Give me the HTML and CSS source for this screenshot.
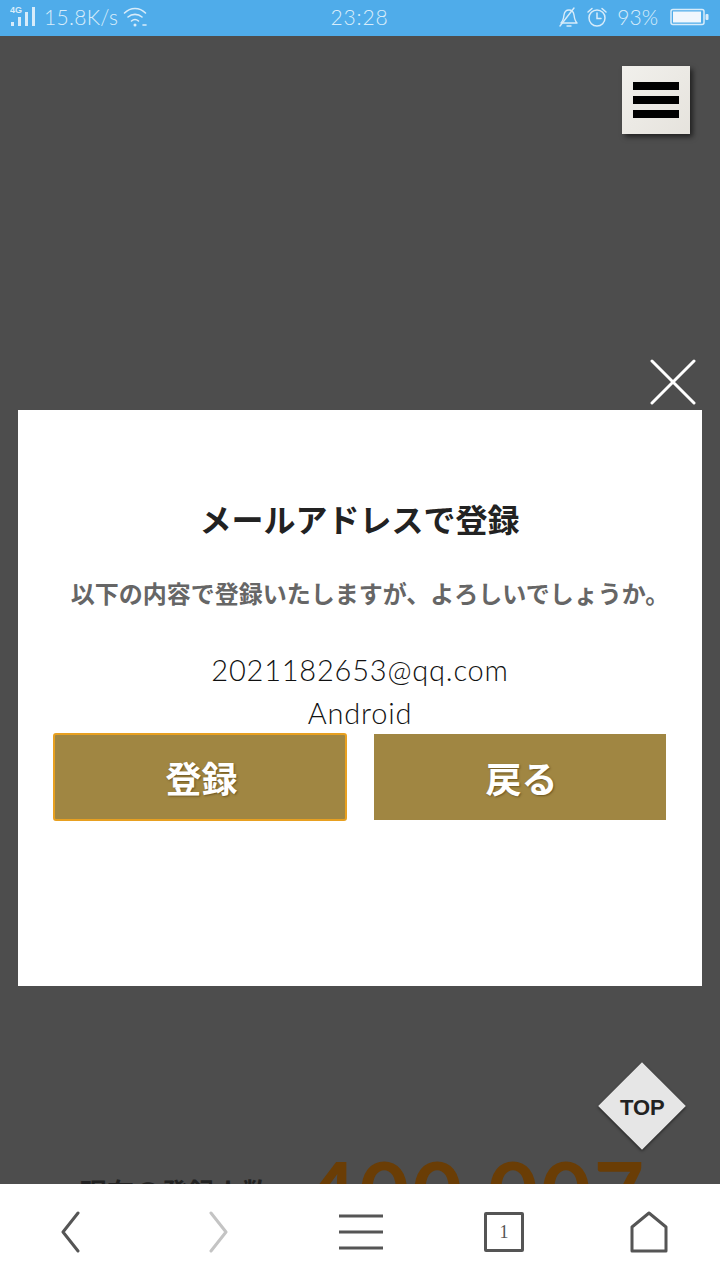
FILE: index.html
```html
<!DOCTYPE html>
<html lang="ja">
<head>
<meta charset="utf-8">
<title>メールアドレスで登録</title>
<link rel="stylesheet" href="styles.css">
</head>
<body>
<div class="phone">
  <header class="status">
    <div class="status-left">
      <svg class="sig" width="28" height="22" viewBox="0 0 28 22"><text x="0" y="7" class="sig-text">4G</text><g fill="#d8ecfa"><rect x="1" y="16" width="3" height="4"/><rect x="8" y="11" width="3" height="9"/><rect x="15" y="6" width="3" height="14"/><rect x="22" y="1" width="3" height="19"/></g></svg>
      <span class="speed">15.8K/s</span>
      <svg class="wifi" width="26" height="22" viewBox="0 0 26 22" fill="none" stroke="#d8ecfa" stroke-width="1.6" stroke-linecap="round"><path d="M1.500 7C7.500 1 16.500 1 22.500 7"/><path d="M5 11C9 7.500 15 7.500 19 11"/><path d="M8.500 15C10.800 13 13.200 13 15.500 15"/><circle cx="12" cy="19" r="1.500" fill="#d8ecfa" stroke="none"/><path d="M20 19h3"/></svg>
    </div>
    <div class="clock">23:28</div>
    <div class="status-right">
      <svg width="22" height="22" viewBox="0 0 22 22" fill="none" stroke="#d8ecfa" stroke-width="1.400" stroke-linecap="round" stroke-linejoin="round"><path d="M3 17c2-2 2.500-4 3-8 .4-3 2.500-5 5-5s4.600 2 5 5c.5 4 1 6 3 8z"/><path d="M9 20h4"/><path d="M2 20L16 2"/></svg>
      <svg width="22" height="22" viewBox="0 0 22 22" fill="none" stroke="#d8ecfa" stroke-width="1.500" stroke-linecap="round"><circle cx="11" cy="12" r="8"/><path d="M11 7v5.500h4"/><path d="M2 6l4-3.500M20 6l-4-3.500"/></svg>
      <span class="pct">93%</span>
      <svg width="39" height="18" viewBox="0 0 39 18"><rect x="1" y="1.500" width="33" height="15" rx="2" fill="none" stroke="#d8ecfa" stroke-width="1.500"/><rect x="3" y="3.500" width="28" height="11" fill="#f0f7fd"/><rect x="35.500" y="6" width="3" height="6" rx="1" fill="#d8ecfa"/></svg>
    </div>
  </header>

  <main class="stage">
    <span class="count-label">現在の登録人数</span>
    <span class="count-num">400,007</span>

    <button class="menu-btn" type="button" aria-label="menu"><span></span><span></span><span></span></button>

    <svg class="close" width="46" height="46" viewBox="0 0 46 46" stroke="#fff" stroke-width="3" stroke-linecap="round"><path d="M2 2L44 44M44 2L2 44"/></svg>

    <section class="modal">
      <h1 class="title">メールアドレスで登録</h1>
      <p class="lead">以下の内容で登録いたしますが、よろしいでしょうか。</p>
      <p class="value email">2021182653@qq.com</p>
      <p class="value device">Android</p>
      <div class="actions">
        <button class="action focus" type="button">登録</button>
        <button class="action" type="button">戻る</button>
      </div>
    </section>

    <a class="top"><span>TOP</span></a>
  </main>

  <nav class="nav">
    <svg width="22" height="42" viewBox="0 0 22 42" fill="none" stroke="#555" stroke-width="3" stroke-linecap="round" stroke-linejoin="round"><path d="M18 2L3 21l15 19"/></svg>
    <svg width="22" height="42" viewBox="0 0 22 42" fill="none" stroke="#c4c4c4" stroke-width="3" stroke-linecap="round" stroke-linejoin="round"><path d="M4 2l15 19L4 40"/></svg>
    <svg width="44" height="38" viewBox="0 0 44 38" stroke="#555" stroke-width="3"><path d="M0 3h44M0 19h44M0 35h44"/></svg>
    <div class="tabs">1</div>
    <svg width="38" height="42" viewBox="0 0 38 42" fill="none" stroke="#555" stroke-width="3" stroke-linejoin="round"><path d="M19 2L36 16v24H2V16z"/></svg>
  </nav>
</div>
</body>
</html>
```
FILE: styles.css
```css
* { box-sizing: border-box; }
html, body { margin: 0; padding: 0; }
body { font-family: "Noto Sans CJK JP", "Noto Sans", sans-serif; }

.phone { width: 720px; height: 1280px; display: flex; flex-direction: column; overflow: hidden; }

.status {
  height: 36px; flex: none; background: #4facea; color: #d8ecfa;
  display: grid; grid-template-columns: 1fr auto 1fr; align-items: center;
  padding: 0 11px 3px 10px; font-family: "Lato", sans-serif; font-size: 21px; font-weight: 300;
}
.status-left { display: flex; align-items: center; gap: 6px; }
.status-right { display: flex; align-items: center; justify-content: flex-end; gap: 6px; }
.sig-text { font-family: "Liberation Sans", sans-serif; font-size: 9px; font-weight: 700; fill: #d8ecfa; }
.speed { letter-spacing: .3px; }
.wifi { margin-left: -1px; }
.clock { letter-spacing: .8px; color: #d8ecfa; }
.pct { margin: 0 6px 0 3px; }

.stage { flex: 1; position: relative; overflow: hidden; background: #4d4d4d; padding: 374px 18px 0; }

.count-label { position: absolute; left: 80px; top: 1136px; font-size: 27px; line-height: 40px; font-weight: 700; color: #222; white-space: nowrap; }
.count-num { position: absolute; left: 306px; top: 1109px; font-family: "Lato", sans-serif; font-size: 87px; line-height: 92px; font-weight: 700; color: #6a3d05; letter-spacing: 2.500px; white-space: nowrap; }

.menu-btn {
  position: absolute; left: 622px; top: 30px; width: 68px; height: 68px; padding: 0;
  border: 0; border-radius: 0;
  background: linear-gradient(135deg, #f1f0ec, #e6e3dd);
  box-shadow: 3px 3px 5px rgba(0,0,0,.55);
  display: flex; flex-direction: column; align-items: center; justify-content: center; gap: 6px;
}
.menu-btn span { display: block; width: 46px; height: 8px; background: #000; }

.close { position: absolute; left: 650px; top: 323px; }

.modal {
  position: relative; width: 684px; height: 576px; background: #fff; padding-top: 83px;
  display: flex; flex-direction: column; align-items: center;
}
.title { margin: 0 0 0 -1px; font-size: 32px; line-height: 50px; font-weight: 700; color: #222; }
.lead { margin: 26px 0 0 20px; font-size: 24px; line-height: 48px; font-weight: 700; color: #666; }
.value { margin: 0; font-family: "Lato", sans-serif; font-weight: 300; font-size: 29px; line-height: 42px; color: #111; letter-spacing: .8px; }
.email { margin-top: 32px; }
.device { margin-top: 1px; }
.actions { display: flex; gap: 27px; width: 613px; align-items: center; margin: -1px 0 0 -2px; }
.action {
  width: 292px; height: 86px; padding: 0 0 0 4px; border: 0; border-radius: 0;
  background: #a08642; color: #fff; font: 700 36px "Noto Sans CJK JP", sans-serif;
  text-shadow: 1px 1px 2px rgba(60,40,0,.5);
}
.action.focus { width: 294px; height: 88px; border: 2px solid #e8a020; border-radius: 3px; }

.top {
  position: absolute; left: 611px; top: 1039px; width: 62px; height: 62px; transform: rotate(45deg);
  background: #e6e6e6; box-shadow: 1px 1px 3px rgba(0,0,0,.5);
  display: flex; align-items: center; justify-content: center;
}
.top span { transform: rotate(-45deg) translateY(1.500px); font-family: "Liberation Sans", sans-serif; font-weight: 700; font-size: 22px; color: #222; }

.nav {
  height: 96px; flex: none; background: #fff; display: grid;
  grid-template-columns: 141px 153px 133px 154px 135px; align-items: center; justify-items: center;
}
.tabs {
  width: 40px; height: 40px; border: 3px solid #555; border-radius: 2px;
  display: flex; align-items: center; justify-content: center;
  font: 18px "Liberation Serif", serif; color: #555;
}
```
